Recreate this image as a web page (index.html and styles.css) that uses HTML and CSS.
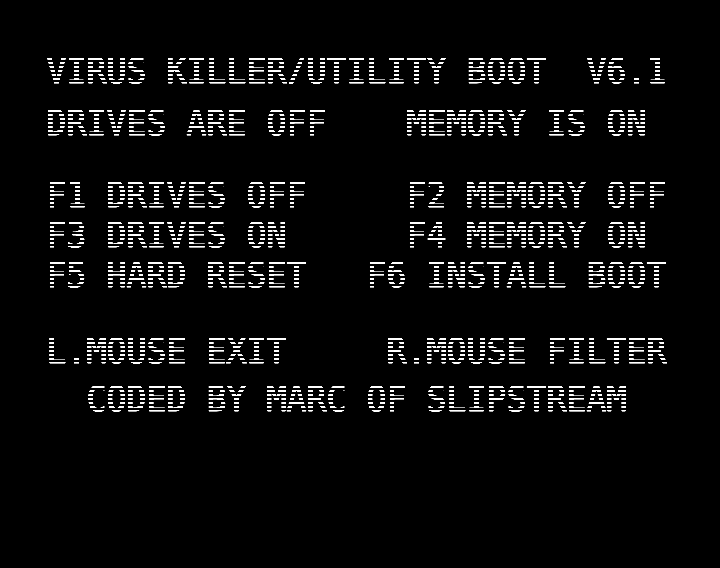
FILE: index.html
```html
<!DOCTYPE html>
<html lang="en">
<head>
<meta charset="utf-8">
<title>Virus Killer/Utility Boot</title>
<link rel="stylesheet" href="styles.css">
</head>
<body>
<main class="screen">
<header class="group title">
<p class="line">VIRUS KILLER/UTILITY BOOT  V6.1</p>
<p class="line">DRIVES ARE OFF    MEMORY IS ON</p>
</header>
<section class="group keys">
<p class="line">F1 DRIVES OFF     F2 MEMORY OFF</p>
<p class="line">F3 DRIVES ON      F4 MEMORY ON</p>
<p class="line">F5 HARD RESET   F6 INSTALL BOOT</p>
</section>
<footer class="group credits">
<p class="line">L.MOUSE EXIT     R.MOUSE FILTER</p>
<p class="line">  CODED BY MARC OF SLIPSTREAM</p>
</footer>
</main>
</body>
</html>
```

FILE: styles.css
```css
* { box-sizing: border-box; }

body {
  margin: 0;
  background: #000;
}

.screen {
  position: relative;
  width: 720px;
  height: 568px;
  padding: 51px 0 0 46.5px;
  overflow: hidden;
  background: #000;
  color: #fff;
  font-family: "DejaVu Sans Mono", "Liberation Mono", monospace;
  font-size: 33.22px;
  filter: contrast(3);
}

/* Blank every other pair of scanlines */
.screen::after {
  content: "";
  position: absolute;
  inset: 0;
  pointer-events: none;
  background: repeating-linear-gradient(to bottom, #000 0 2px, transparent 2px 4px);
}

.group {
  display: flex;
  flex-direction: column;
}

.title { gap: 12px; }
.keys { margin-top: 32px; }
.credits { margin-top: 36px; gap: 8px; }

.line {
  height: 40px;
  margin: 0;
  line-height: 40px;
  white-space: pre;
  transform: translateY(0.5px) scaleY(1.05);
  clip-path: inset(6px 0 7px 0);
  -webkit-text-stroke: 1.1px #fff;
}
```
